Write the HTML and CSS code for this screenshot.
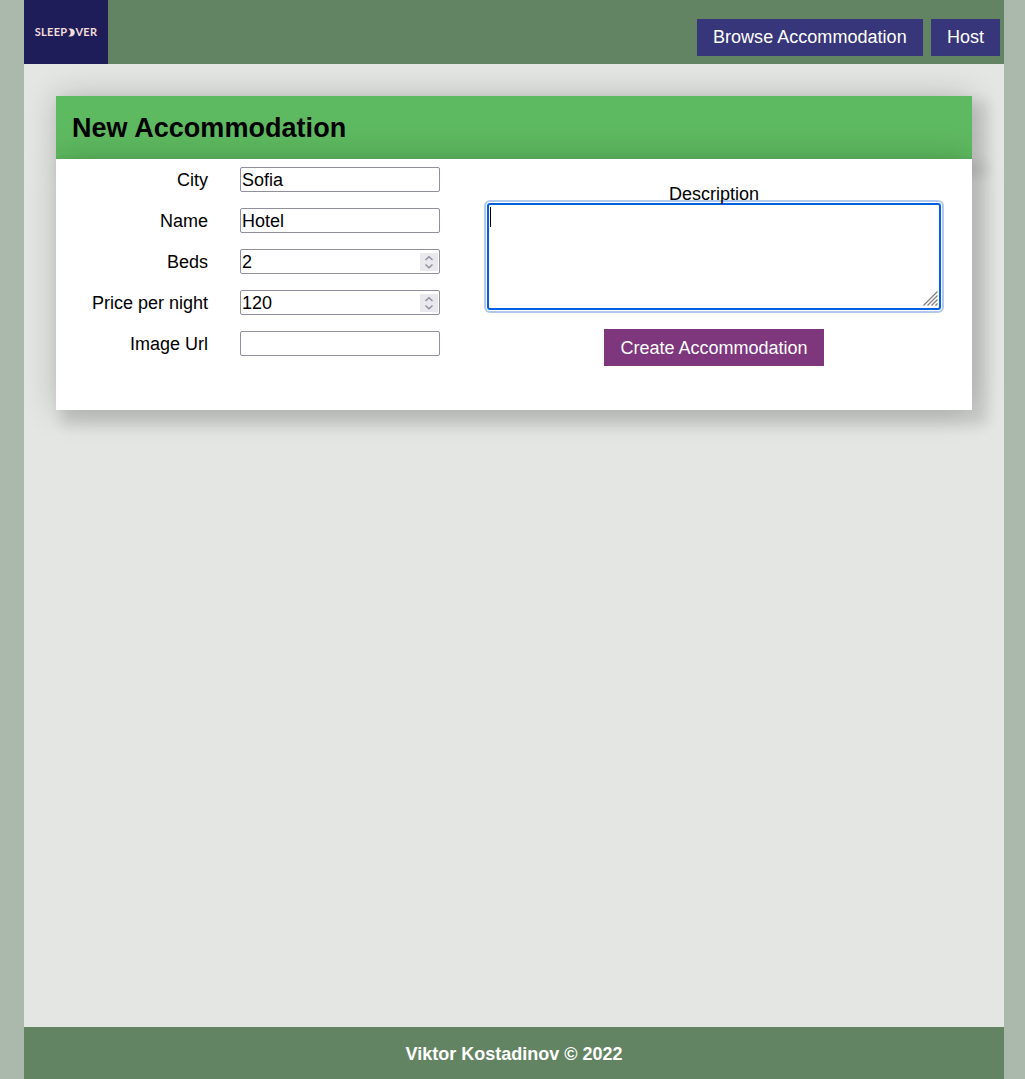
FILE: index.html
```html
<!DOCTYPE html>
<html lang="en">
<head>
<meta charset="utf-8">
<title>SleepOver</title>
<link rel="stylesheet" href="styles.css">
</head>
<body>
<div class="container">
  <header class="site-header">
    <a class="logo" aria-label="SleepOver"><span>SLEEP</span><svg class="moon" viewBox="0 0 8 9"><path d="M1.200.8C4.500-.3 7.800 1.200 7.800 4.500S4.500 9.300 1.200 8.200C3 7.500 3.600 6.200 3.600 4.500S3 1.500 1.200.8Z"/></svg><span>VER</span></a>
    <nav class="nav">
      <a class="action browse">Browse Accommodation</a>
      <a class="action">Host</a>
    </nav>
  </header>
  <main class="content">
    <h2 class="box title">New Accommodation</h2>
    <form class="box form">
      <div class="fields">
        <label class="row"><span class="label">City</span><span class="input">Sofia</span></label>
        <label class="row"><span class="label">Name</span><span class="input">Hotel</span></label>
        <label class="row"><span class="label">Beds</span><span class="input">2<svg class="spinner" viewBox="0 0 18 18"><path d="M5.500 7L9 3.800 12.500 7M5.500 11.500L9 14.700l3.500-3.200"/></svg></span></label>
        <label class="row"><span class="label">Price per night</span><span class="input">120<svg class="spinner" viewBox="0 0 18 18"><path d="M5.500 7L9 3.800 12.500 7M5.500 11.500L9 14.700l3.500-3.200"/></svg></span></label>
        <label class="row"><span class="label">Image Url</span><span class="input"></span></label>
      </div>
      <div class="details">
        <span class="details-label">Description</span>
        <div class="textarea"><span class="caret"></span><svg class="grip" viewBox="0 0 15 15"><path d="M.5 14.500l14-14M4.500 14.500l10-10M8.500 14.500l6-6M12.500 14.500l2-2"/></svg></div>
        <a class="action submit">Create Accommodation</a>
      </div>
    </form>
  </main>
  <footer class="site-footer">Viktor Kostadinov © 2022</footer>
</div>
</body>
</html>
```
FILE: styles.css
```css
* { box-sizing: border-box; }

body {
  margin: 0;
  background: #abb9ac;
  color: #000;
  font: 18px/21px "Liberation Sans", Arial, sans-serif;
}

.container {
  display: flex;
  flex-direction: column;
  width: 980px;
  height: 1079px;
  margin: 0 21px 0 24px;
  background: #e4e6e3;
}

.site-header {
  display: flex;
  justify-content: space-between;
  height: 64px;
  background: #638463;
}

.logo {
  display: flex;
  align-items: center;
  justify-content: center;
  width: 84px;
  height: 64px;
  background: #1f1d59;
  color: #f3ddd8;
  font: bold 11px/12px Lato, sans-serif;
  letter-spacing: 0.3px;
}

.moon {
  width: 8px;
  height: 9px;
  fill: #f3ddd8;
}

.nav {
  display: flex;
  gap: 8px;
  padding: 19px 4px 8px 0;
}

.action {
  padding: 8px 16px;
  background: #37367b;
  color: #fff;
}

.browse {
  width: 226px;
  letter-spacing: 0.03px;
}

.content {
  flex: 1;
  padding: 32px;
}

.box {
  box-shadow: 10px 10px 12px 5px rgba(0, 0, 0, 0.11), 0 0 32px rgba(0, 0, 0, 0.2);
}

.title {
  margin: 0;
  padding: 17px 16px 15px;
  background: #5eba60;
  font-size: 27px;
  line-height: 31px;
  letter-spacing: 0.04px;
}

.form {
  display: flex;
  height: 251px;
  background: #fff;
}

.fields {
  display: flex;
  flex-direction: column;
  gap: 16px;
  width: 400px;
  padding-top: 8px;
}

.row {
  display: flex;
  gap: 32px;
  height: 25px;
}

.label {
  width: 152px;
  line-height: 26px;
  text-align: right;
}

.input {
  display: flex;
  justify-content: space-between;
  align-items: center;
  width: 200px;
  height: 25px;
  padding: 1px;
  border: 1px solid #8f8f9d;
  border-radius: 2px;
  line-height: 24px;
}

.spinner {
  width: 18px;
  height: 18px;
  background: #e9e9ed;
  fill: none;
  stroke: #8f8f9d;
  stroke-width: 1.5;
}

.details {
  display: flex;
  flex-direction: column;
  align-items: center;
  width: 516px;
  padding-top: 24px;
}

.details-label {
  z-index: 1;
  line-height: 22px;
}

.textarea {
  display: flex;
  justify-content: space-between;
  width: 454px;
  height: 107px;
  margin: -2px 0 19px;
  padding: 2px 1px;
  background: #fff;
  border: 2px solid #0061e0;
  border-radius: 3px;
  box-shadow: 0 0 0 1px #fff, 0 0 0 3px #b2c9ef;
}

.caret {
  width: 1px;
  height: 20px;
  background: #000;
}

.grip {
  align-self: flex-end;
  width: 15px;
  height: 15px;
  fill: none;
  stroke: #808080;
  stroke-width: 1.3;
}

.submit {
  padding: 9px 16px 7px;
  background: #7e367d;
}

.site-footer {
  padding: 17px 16px 15px;
  background: #638463;
  color: #fff;
  font-weight: bold;
  line-height: 20px;
  text-align: center;
}
```
